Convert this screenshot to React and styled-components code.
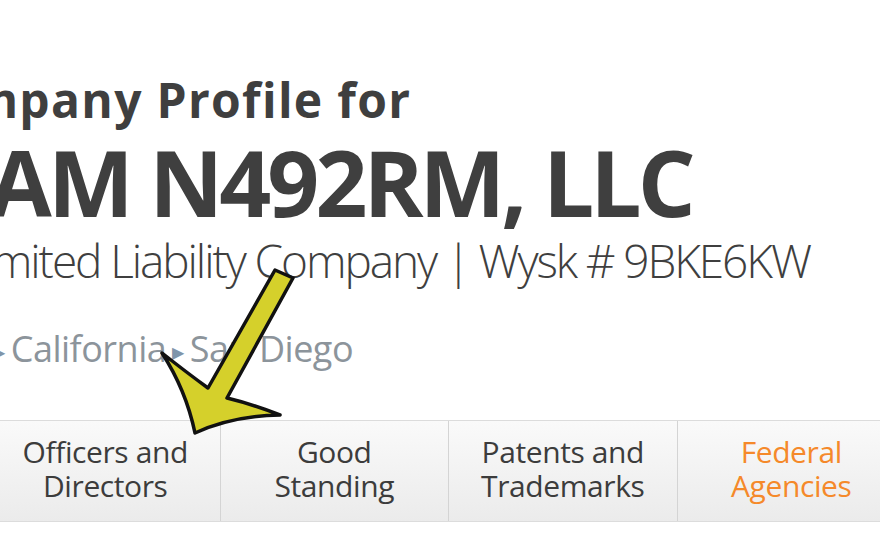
import React from "react";
import styled, { createGlobalStyle } from "styled-components";

const Global = createGlobalStyle`
  html, body { margin: 0; padding: 0; background: #ffffff; }
  body { overflow: hidden; width: 880px; height: 542px; }
  #root { width: 880px; height: 542px; }
`;

const Page = styled.div`
  position: relative;
  width: 880px;
  height: 542px;
  overflow: hidden;
  background: #ffffff;
  font-family: "Open Sans", "Liberation Sans", sans-serif;
  color: #3f3f3f;
  padding-top: 76px;
  box-sizing: border-box;
`;

const Header = styled.div`
  display: flex;
  flex-direction: column;
  white-space: nowrap;
`;

const Line = styled.div`
  margin-left: ${(p) => p.$shift}px;
  margin-top: ${(p) => p.$gap}px;
  font-size: ${(p) => p.$size}px;
  line-height: ${(p) => p.$size}px;
  font-weight: ${(p) => p.$weight};
  letter-spacing: ${(p) => p.$track || 0}px;
  color: ${(p) => p.$color || "#3f3f3f"};
`;

const Sep = styled.span`
  color: #7f95aa;
  font-size: 0.45em;
  vertical-align: 0.25em;
  margin: 0 6px;
`;

const TabBar = styled.div`
  margin-top: 50px;
  margin-left: -9px;
  display: flex;
  height: 100px;
  border-top: 1px solid #dcdcdc;
  border-bottom: 1px solid #dcdcdc;
  background: linear-gradient(#fafafa, #ebebeb);
`;

const Tab = styled.div`
  flex: 0 0 228.5px;
  display: flex;
  align-items: center;
  justify-content: center;
  text-align: center;
  padding-bottom: 4px;
  font-size: 30px;
  line-height: 34px;
  letter-spacing: -0.4px;
  color: ${(p) => (p.$active ? "#f5892a" : "#3c3c3c")};
  border-left: ${(p) => (p.$first ? "none" : "1px solid #d4d4d4")};
  box-sizing: border-box;
`;

const ArrowSvg = styled.svg`
  position: absolute;
  left: 0;
  top: 0;
  pointer-events: none;
`;

export default function App() {
  return (
    <Page>
      <Global />
      <Header>
        <Line $shift={-92} $gap={0} $size={48} $weight={700} $track={1.3}>
          Company Profile for
        </Line>
        <Line $shift={-57} $gap={13} $size={91} $weight={700} $track={-4}>
          SAM N492RM, LLC
        </Line>
        <Line $shift={-38} $gap={9} $size={46} $weight={300} $track={-2.1}>
          Limited Liability Company | Wysk # 9BKE6KW
        </Line>
        <Line $shift={-80} $gap={48} $size={36} $weight={400} $track={-0.5} $color="#8c949b">
          USA<Sep>▶</Sep>California<Sep>▶</Sep>San Diego
        </Line>
      </Header>
      <TabBar>
        <Tab $first>Officers and<br />Directors</Tab>
        <Tab>Good<br />Standing</Tab>
        <Tab>Patents and<br />Trademarks</Tab>
        <Tab $active>Federal<br />Agencies</Tab>
      </TabBar>
      <ArrowSvg width="880" height="542" viewBox="0 0 880 542">
        <path
          d="M275,270 L293,278 L227,398 Q252,404 280,415 Q232,416 195,433 Q186,390 162,353 Q186,372 208,388 Z"
          fill="#d5d02b"
          stroke="#111111"
          strokeWidth="3.5"
          strokeLinejoin="round"
        />
      </ArrowSvg>
    </Page>
  );
}
